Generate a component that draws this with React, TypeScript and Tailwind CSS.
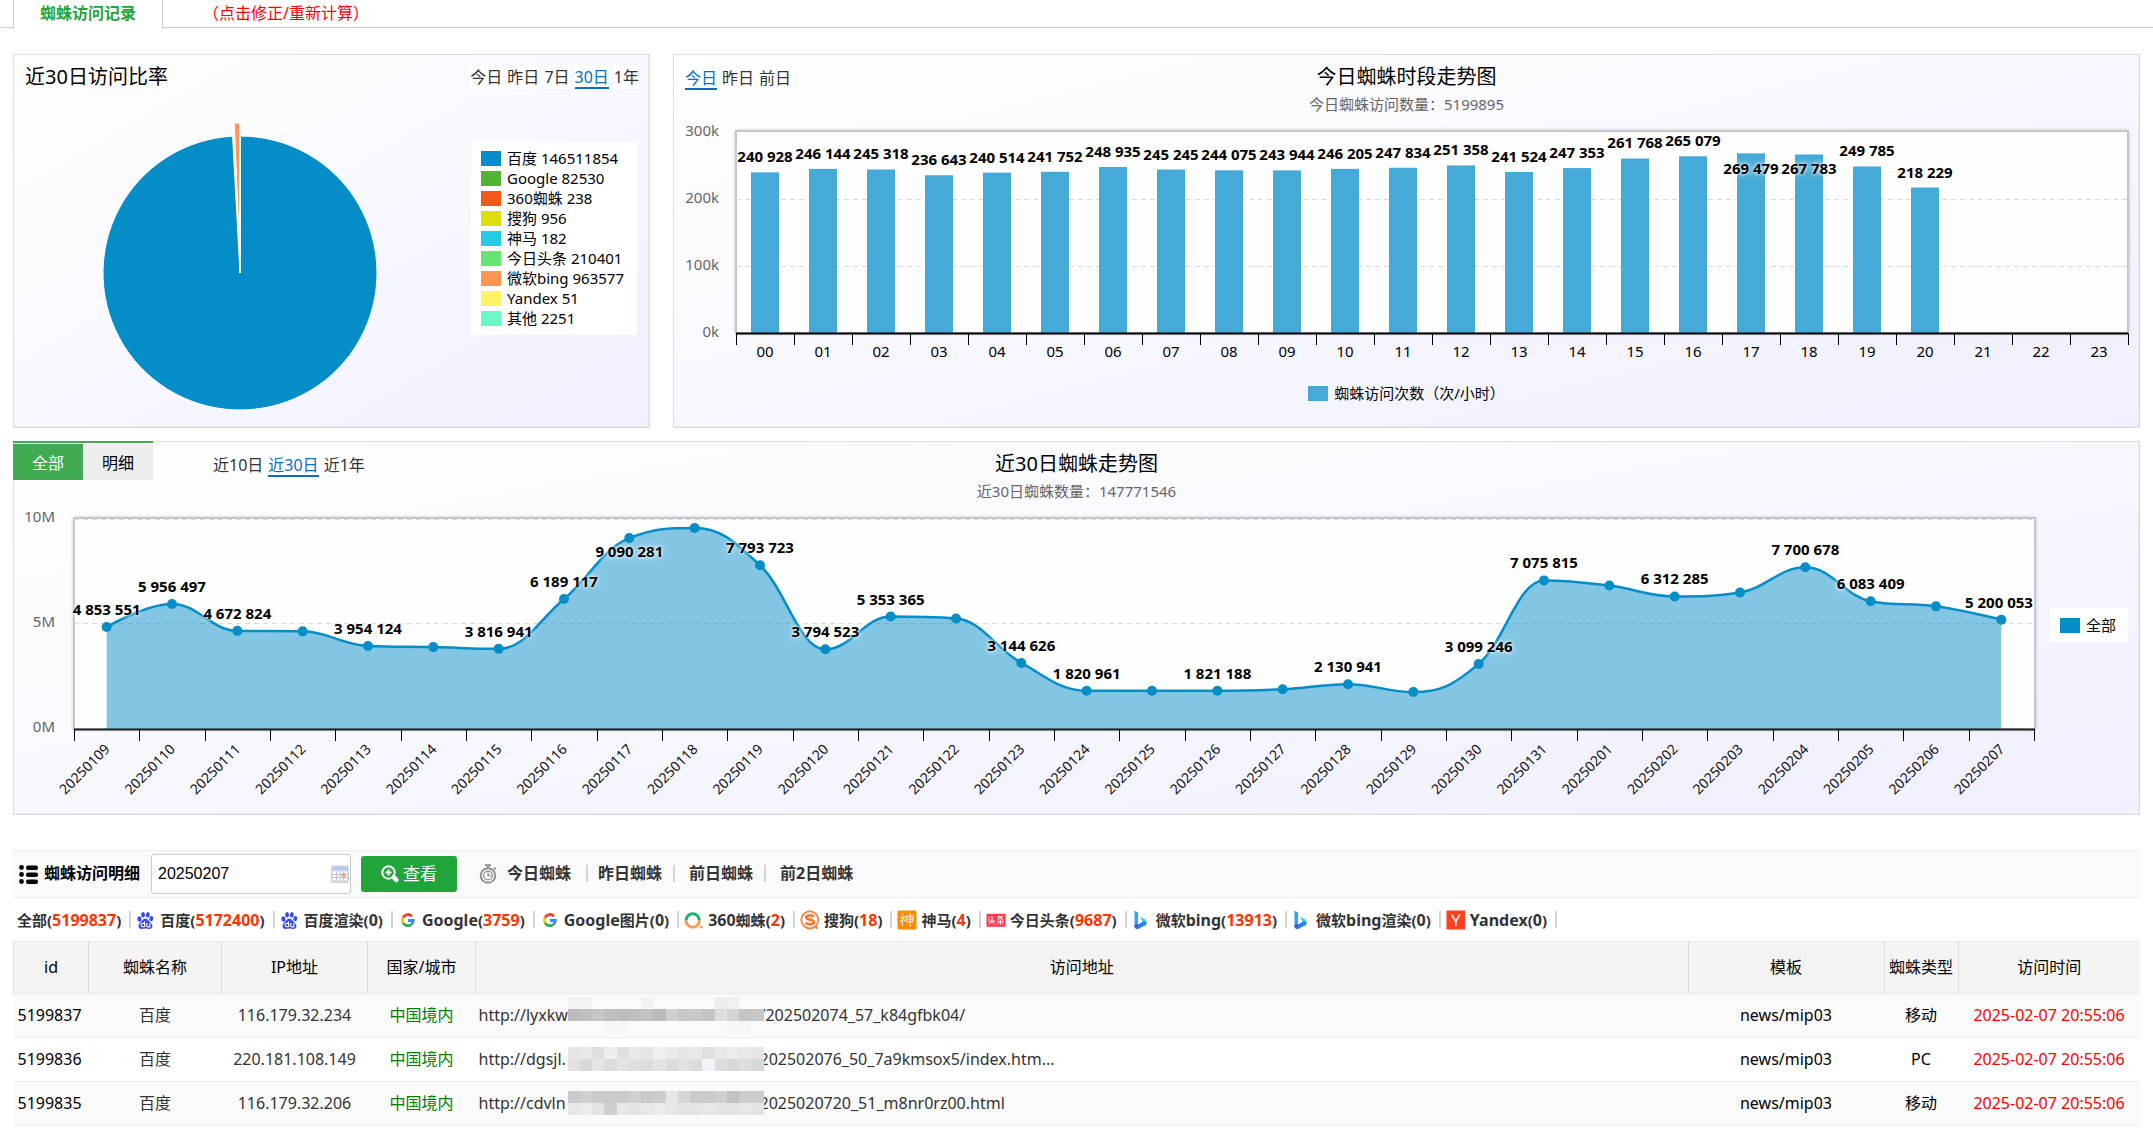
import React from "react";

const SANS = "font-['Noto_Sans','Noto_Sans_CJK_SC',sans-serif]";

/* ---------- data ---------- */

const ratio = [
  { name: "百度", count: 146511854, color: "#058dc7" },
  { name: "Google", count: 82530, color: "#50b432" },
  { name: "360蜘蛛", count: 238, color: "#f5561b" },
  { name: "搜狗", count: 956, color: "#dddf0d" },
  { name: "神马", count: 182, color: "#24cbe5" },
  { name: "今日头条", count: 210401, color: "#64e572" },
  { name: "微软bing", count: 963577, color: "#ff9655" },
  { name: "Yandex", count: 51, color: "#fff263" },
  { name: "其他", count: 2251, color: "#6af9c4" },
];

const hourly = [
  240928, 246144, 245318, 236643, 240514, 241752, 248935, 245245, 244075, 243944, 246205, 247834,
  251358, 241524, 247353, 261768, 265079, 269479, 267783, 249785, 218229,
];

const daily: [string, number, ("above" | "below")?][] = [
  ["20250109", 4853551, "above"],
  ["20250110", 5956497, "above"],
  ["20250111", 4672824, "above"],
  ["20250112", 4650000],
  ["20250113", 3954124, "above"],
  ["20250114", 3900000],
  ["20250115", 3816941, "above"],
  ["20250116", 6189117, "above"],
  ["20250117", 9090281, "below"],
  ["20250118", 9570000],
  ["20250119", 7793723, "above"],
  ["20250120", 3794523, "above"],
  ["20250121", 5353365, "above"],
  ["20250122", 5260000],
  ["20250123", 3144626, "above"],
  ["20250124", 1820961, "above"],
  ["20250125", 1820000],
  ["20250126", 1821188, "above"],
  ["20250127", 1890000],
  ["20250128", 2130941, "above"],
  ["20250129", 1760000],
  ["20250130", 3099246, "above"],
  ["20250131", 7075815, "above"],
  ["20250201", 6830000],
  ["20250202", 6312285, "above"],
  ["20250203", 6500000],
  ["20250204", 7700678, "above"],
  ["20250205", 6083409, "above"],
  ["20250206", 5840000],
  ["20250207", 5200053, "above"],
];

const spaced = (n: number) => String(n).replace(/\B(?=(\d{3})+$)/g, " ");

/* ---------- shared parts ---------- */

const panelClass =
  "border border-[#ddd] bg-[linear-gradient(to_bottom_right,#ffffff_0%,#f0f0ff_100%)] shadow-[inset_-1px_-1px_0_#e8e8ee]";

function RangeLinks({ items, active }: { items: string[]; active: string }) {
  return (
    <nav className="flex h-6 gap-[5px] text-base leading-6">
      {items.map((t) => (
        <a
          key={t}
          href="#"
          className={
            t === active
              ? "h-6 border-b-2 border-[#0a6ebd] bg-white text-[#0a6ebd]"
              : "bg-white text-[#333]"
          }
        >
          {t}
        </a>
      ))}
    </nav>
  );
}

function ChartTitle({ title, sub }: { title: string; sub: string }) {
  return (
    <div className="pt-[7px] text-center">
      <h2 className="text-xl leading-[30px] text-black">{title}</h2>
      <p className="text-[15px] leading-[25px] text-[#666]">{sub}</p>
    </div>
  );
}

function LegendItem({ color, label }: { color: string; label: string }) {
  return (
    <div className="flex h-5 items-center gap-1.5 text-[15px] leading-5 whitespace-nowrap text-black">
      <span className="h-[15px] w-5" style={{ backgroundColor: color }} />
      {label}
    </div>
  );
}

const labelClass = "fill-black text-[15px] font-bold [text-shadow:0_0_6px_#fff,0_0_3px_#fff]";

/* ---------- charts ---------- */

function PieChart() {
  const cx = 226;
  const cy = 174;
  const r = 137;
  const at = (deg: number, dy = 0) => {
    const a = (deg * Math.PI) / 180;
    return `${cx + r * Math.sin(a)},${cy + dy - r * Math.cos(a)}`;
  };
  return (
    <svg viewBox="0 0 457 328" className="min-w-0 flex-1">
      <path d={`M${cx},${cy} L${at(0)} A${r},${r} 0 1 1 ${at(-3.1)} Z`} fill="#058dc7" stroke="#fff" />
      <path
        d={`M${cx},${cy - 13} L${at(-2.4, -13)} A${r},${r} 0 0 1 ${at(-0.1, -13)} Z`}
        fill="#ff9655"
        stroke="#fff"
      />
      <path d={`M${cx},${cy} L${at(0)}`} stroke="#fff" strokeWidth="2" />
    </svg>
  );
}

function BarChart() {
  const x0 = 62;
  const x1 = 1454;
  const base = 216;
  const step = 58;
  const y = (v: number) => base - (v / 300000) * 200;
  return (
    <svg viewBox="0 0 1465 258" className="block w-full">
      <rect x={x0} y="14" width={x1 - x0} height={base - 14} fill="#000" opacity="0.3" className="blur-[2px]" />
      <rect x={x0} y="14" width={x1 - x0} height={base - 14} fill="#fefefe" stroke="#c6c6c8" strokeWidth="2" />
      {[100000, 200000].map((v) => (
        <line
          key={v}
          x1={x0}
          x2={x1}
          y1={Math.floor(y(v)) + 0.5}
          y2={Math.floor(y(v)) + 0.5}
          stroke="#d8d8d8"
          strokeDasharray="5 4"
        />
      ))}
      {["0k", "100k", "200k", "300k"].map((t, i) => (
        <text key={t} x="45" y={220 - i * 67} textAnchor="end" className="fill-[#666] text-[15px]">
          {t}
        </text>
      ))}
      {hourly.map((v, i) => (
        <rect key={i} x={x0 + step * i + 15} y={y(v)} width="28" height={base - y(v)} fill="#45aad7" />
      ))}
      <line x1={x0} x2={x1} y1={base + 0.5} y2={base + 0.5} stroke="#000" strokeWidth="2" />
      {Array.from({ length: 25 }, (_, i) => (
        <line key={i} x1={x0 + step * i + 0.5} x2={x0 + step * i + 0.5} y1={base} y2={base + 12} stroke="#000" />
      ))}
      {Array.from({ length: 24 }, (_, i) => (
        <text key={i} x={x0 + step * i + 29} y="240" textAnchor="middle" className="fill-black text-[15px]">
          {String(i).padStart(2, "0")}
        </text>
      ))}
      {hourly.map((v, i) => (
        <text
          key={i}
          x={x0 + step * i + 29}
          y={v > 266000 ? 57 : Math.round(y(v)) - 10}
          textAnchor="middle"
          className={labelClass}
        >
          {spaced(v)}
        </text>
      ))}
    </svg>
  );
}

/* Smooth curve through the points, without overshoot at local extremes. */
function splinePath(pts: { x: number; y: number }[]) {
  const s = 1.5;
  const d = s + 1;
  let path = `M${pts[0].x},${pts[0].y}`;
  let prev = { ...pts[0] };
  for (let i = 1; i < pts.length; i++) {
    const p = pts[i];
    const last = pts[i - 1];
    const next = pts[i + 1];
    let left = { x: p.x, y: p.y };
    let right = { x: p.x, y: p.y };
    if (next) {
      left = { x: (s * p.x + last.x) / d, y: (s * p.y + last.y) / d };
      right = { x: (s * p.x + next.x) / d, y: (s * p.y + next.y) / d };
      const fix = ((right.y - left.y) * (right.x - p.x)) / (right.x - left.x) + p.y - right.y;
      left.y += fix;
      right.y += fix;
      if (left.y > last.y && left.y > p.y) {
        left.y = Math.max(last.y, p.y);
        right.y = 2 * p.y - left.y;
      } else if (left.y < last.y && left.y < p.y) {
        left.y = Math.min(last.y, p.y);
        right.y = 2 * p.y - left.y;
      }
      if (right.y > next.y && right.y > p.y) {
        right.y = Math.max(next.y, p.y);
        left.y = 2 * p.y - right.y;
      } else if (right.y < next.y && right.y < p.y) {
        right.y = Math.min(next.y, p.y);
        left.y = 2 * p.y - right.y;
      }
    }
    path += ` C${prev.x},${prev.y} ${left.x},${left.y} ${p.x},${p.y}`;
    prev = right;
  }
  return path;
}

function TrendChart() {
  const x0 = 60;
  const x1 = 2020;
  const base = 225;
  const step = (x1 - x0) / daily.length;
  const pts = daily.map(([, v], i) => ({
    x: x0 + step * (i + 0.5),
    y: base - (v / 10000000) * 210,
  }));
  const line = splinePath(pts);
  return (
    <svg viewBox="0 0 2036 310" className="block min-w-0 flex-1">
      <rect x={x0} y="14" width={x1 - x0 + 1} height={base - 14} fill="#000" opacity="0.3" className="blur-[2px]" />
      <rect x={x0} y="14" width={x1 - x0 + 1} height={base - 14} fill="#fefefe" stroke="#c6c6c8" strokeWidth="2" />
      {[15.5, 119.5].map((v) => (
        <line key={v} x1={x0} x2={x1} y1={v} y2={v} stroke="#d8d8d8" strokeDasharray="5 4" />
      ))}
      {["0M", "5M", "10M"].map((t, i) => (
        <text key={t} x="41" y={228 - i * 105} textAnchor="end" className="fill-[#666] text-[15px]">
          {t}
        </text>
      ))}
      <path
        d={`${line} L${pts[pts.length - 1].x},${base} L${pts[0].x},${base} Z`}
        fill="#058dc7"
        fillOpacity="0.5"
      />
      <line x1={x0} x2={x1 + 1} y1={base + 0.5} y2={base + 0.5} stroke="#222" strokeWidth="2" />
      {Array.from({ length: 31 }, (_, i) => {
        const x = Math.round(x0 + step * i) + 0.5;
        return <line key={i} x1={x} x2={x} y1={base} y2={base + 12} stroke="#000" />;
      })}
      <path d={line} fill="none" stroke="#058dc7" strokeWidth="2.5" />
      {pts.map((p, i) => (
        <circle key={i} cx={p.x} cy={p.y} r="5" fill="#058dc7" />
      ))}
      {daily.map(([date], i) => {
        const x = pts[i].x + 4;
        return (
          <text
            key={date}
            x={x}
            y="246"
            textAnchor="end"
            transform={`rotate(-45 ${x} 246)`}
            className="fill-[#111] text-[14px]"
          >
            {date}
          </text>
        );
      })}
      {daily.map(([date, v, place], i) =>
        place ? (
          <text
            key={date}
            x={Math.min(pts[i].x, x1 - 35)}
            y={Math.round(pts[i].y) + (place === "above" ? -12 : 19)}
            textAnchor="middle"
            className={labelClass}
          >
            {spaced(v)}
          </text>
        ) : null
      )}
    </svg>
  );
}

/* ---------- icons ---------- */

const ListIcon = () => (
  <svg viewBox="0 0 19 19" className="size-[19px]">
    {[2.5, 9.5, 16.5].map((y) => (
      <g key={y}>
        <circle cx="2.5" cy={y} r="2.4" />
        <rect x="7" y={y - 2} width="12" height="4.4" rx="2" />
      </g>
    ))}
  </svg>
);

const CalendarIcon = () => (
  <svg viewBox="0 0 18 18" className="size-[18px]">
    <rect x="0.5" y="1" width="17" height="16.5" rx="1.5" fill="#d9dce4" stroke="#cdd0d8" />
    <path d="M1 1.5h16v4H1z" fill="#b9cbe6" />
    <path d="M2 6.500h14V15H2z" fill="#fff" />
    <path d="M2 9.500h14M2 12.500h14M5.500 6.500V15M9 6.500V15M12.500 6.500V15" stroke="#b8c4de" fill="none" />
    <path d="M10.500 8h4v4h-4z" fill="#f3a48c" />
  </svg>
);

const SearchPlusIcon = () => (
  <svg viewBox="0 0 18 18" className="size-[18px]" fill="none" stroke="#fff">
    <circle cx="7.500" cy="7.500" r="6.200" strokeWidth="2" />
    <path d="M7.500 4.500v6M4.500 7.500h6" strokeWidth="1.800" />
    <path d="M12.800 12.200l2.500 2.800" strokeWidth="4.500" strokeLinecap="round" />
  </svg>
);

const StopwatchIcon = () => (
  <svg viewBox="0 0 18 20" className="h-5 w-[18px]" fill="none" stroke="#8f9093">
    <path d="M6 1.200h6" strokeWidth="2" />
    <path d="M9 2v2M15 3.600l1.800 1.800" strokeWidth="2" />
    <circle cx="9" cy="11.500" r="7.300" strokeWidth="2" />
    <circle cx="9" cy="11.500" r="4.400" strokeWidth="1.300" />
    <path d="M9 8.500v3h2.600" strokeWidth="1.400" />
  </svg>
);

const BaiduIcon = () => (
  <svg viewBox="0 0 20 20" className="size-5">
    <g fill="#3b4be0">
      <ellipse cx="3.400" cy="9" rx="2" ry="2.700" transform="rotate(-12 3.4 9)" />
      <ellipse cx="7.100" cy="4.800" rx="1.900" ry="2.800" />
      <ellipse cx="11.800" cy="4.800" rx="1.900" ry="2.800" transform="rotate(8 11.8 4.8)" />
      <ellipse cx="15.300" cy="8.600" rx="2" ry="2.700" transform="rotate(12 15.3 8.6)" />
      <path d="M9.400 8.600c1.700 0 2.600 1.100 3.500 2.400 1.200 1.500 3.500 2.500 3.500 5 0 2-1.400 2.900-3.100 2.900-1.400 0-2.500-.4-3.900-.4s-2.500.4-3.900.4c-1.800 0-3-.9-3-2.900 0-2.500 2.200-3.500 3.400-5 .9-1.300 1.800-2.400 3.500-2.400z" />
    </g>
    <path
      d="M8.600 11.500v5.500M8.600 13.400H6.800a1.700 1.700 0 0 0 0 3.400h1.800M10.800 13v2.800c0 .8.400 1.100 1.200 1.100h1.800V13"
      fill="none"
      stroke="#fff"
      strokeWidth="1.1"
    />
  </svg>
);

const GoogleIcon = () => (
  <svg viewBox="0 0 20 20" className="size-5" fill="none" strokeWidth="2.8">
    <path d="M14 6.200A5.600 5.600 0 0 0 5 7.600" stroke="#ea4335" />
    <path d="M5 7.600a5.600 5.600 0 0 0 0 5.300" stroke="#fbbc05" />
    <path d="M5 12.900a5.600 5.600 0 0 0 8.200 1.700" stroke="#34a853" />
    <path d="M13.200 14.600a5.600 5.600 0 0 0 2.200-4.100H10" stroke="#4285f4" />
  </svg>
);

const So360Icon = () => (
  <svg viewBox="0 0 20 20" className="size-5" fill="none" strokeWidth="3">
    <path d="M2 10.500a6.700 6.700 0 1 1 13.400 0" stroke="#1fae6b" />
    <path d="M2 10.500a6.700 6.700 0 0 0 13.400 0" stroke="#f89a55" />
    <circle cx="17.200" cy="17" r="1.500" fill="#f89a55" />
  </svg>
);

const SogouIcon = () => (
  <svg viewBox="0 0 20 20" className="size-5" fill="none" stroke="#fb7a2d">
    <circle cx="9.800" cy="9.800" r="8.500" strokeWidth="1.700" />
    <path
      d="M14 6.500C13 5.200 6.300 4.500 6.300 7.500c0 3 7.500 1.400 7.500 4.600 0 3.100-6.800 2.500-8.300 1"
      strokeWidth="2.800"
    />
    <path d="M15.800 16.500l1.400 2.300" strokeWidth="2.200" />
  </svg>
);

const ShenmaIcon = () => (
  <svg viewBox="0 0 20 20" className="size-5" fill="none" stroke="#ffe9cf" strokeWidth="1.2">
    <rect x="0.5" y="0.5" width="19" height="19" rx="1.5" fill="#ff8a00" stroke="none" />
    <path d="M5.200 3.500l1.500 1.500M3 7.200h4.300L3.200 12M5.500 9.500V16M7 9.500l1 1.300M9.500 6.200h6.800l-.8 5.500H9.300zM9.500 9h6.500M13 3v14" />
  </svg>
);

const ToutiaoIcon = () => (
  <svg viewBox="0 0 20 20" className="size-5" fill="none" stroke="#fff">
    <rect x="0.5" y="3.800" width="19" height="13" fill="#fb3c50" stroke="none" />
    <path d="M6 6v5.500L2.800 14.500M2.800 6.800l1.400 1M2.400 9l1.500 1M2.200 11.200h7M6.500 12l2.500 2.500" />
    <path d="M13.300 5.500l-2 2.500M12.500 6.800h4l-5.500 3.400M12.500 7.500l5 2.700M11 11.700h6.800M14.300 10v4.800M12.800 12.700l-1.500 1.800M15.800 12.700l1.500 1.800" />
  </svg>
);

const BingIcon = () => (
  <svg viewBox="0 0 20 20" className="size-5">
    <path d="M2.500.8l3.600 1.700v13L2.500 17.300z" fill="#3ba0f4" />
    <path d="M7.800 6.800l4.200 2c2 1 2.900 2.600 2.700 4.600-.1 1.500-.9 2.500-2 3.200l-2.200-5z" fill="#35cfe8" />
    <path d="M2.500 16.500c.3 2.500 2.400 3.300 4.400 2.200l5.600-3.300c1.300-.8 2.100-1.900 2.200-3.200l-3.500-.6-5.100 3z" fill="#2f80ea" />
    <path d="M2.500 15.500l3.600-1.500v2.500c-1 1-2.500 1.500-3.600.2z" fill="#3a4fd8" />
  </svg>
);

const YandexIcon = () => (
  <svg viewBox="0 0 20 20" className="size-5">
    <rect x="0.5" y="0.5" width="18.5" height="19" fill="#fc3f1d" />
    <path d="M5.500 4.500l4.300 7V16M13.800 4.500l-4 7" fill="none" stroke="#ffe3dc" strokeWidth="1.8" />
  </svg>
);

/* ---------- list section ---------- */

const engines: { han?: string; latin?: string; after?: string; count: number; icon?: React.ReactNode }[] = [
  { han: "全部", count: 5199837 },
  { han: "百度", count: 5172400, icon: <BaiduIcon /> },
  { han: "百度渲染", count: 0, icon: <BaiduIcon /> },
  { latin: "Google", count: 3759, icon: <GoogleIcon /> },
  { latin: "Google", after: "图片", count: 0, icon: <GoogleIcon /> },
  { latin: "360", after: "蜘蛛", count: 2, icon: <So360Icon /> },
  { han: "搜狗", count: 18, icon: <SogouIcon /> },
  { han: "神马", count: 4, icon: <ShenmaIcon /> },
  { han: "今日头条", count: 9687, icon: <ToutiaoIcon /> },
  { han: "微软", latin: "bing", count: 13913, icon: <BingIcon /> },
  { han: "微软", latin: "bing", after: "渲染", count: 0, icon: <BingIcon /> },
  { latin: "Yandex", count: 0, icon: <YandexIcon /> },
];

const Divider = () => <span className="h-[17px] w-0.5 shrink-0 bg-[#d4d4d8]" />;

const mosaics = [
  [
    "#f3f3f2 #f3f3f2 #fafafa #fafafa #fafafa #fafafa #f3f3f2 #fafafa #fafafa #fafafa #fafafa #fafafa #ededee #f0f0f0 #fafafa #fafafa",
    "#bcbcbc #c0c0c2 #c6c6c6 #c0c0c2 #bbbcbe #bfbfc0 #c2c2c3 #b9bac0 #d0d0d0 #c8c8c8 #cacaca #c4c4c4 #dededf #d4d5d7 #c4c5c7 #c8c8c9",
    "#fafafa #fafafa #fafafa #f6f6f6 #f6f6f6 #fafafa #fafafa #fafafa #fafafa #fafafa #fafafa #fafafa #fafafa #f6f6f6 #f6f6f6 #fafafa",
  ],
  [
    "#e6e4e6 #e8e8ec #dfdfdf #eeeeee #dfdfdf #e9e9e9 #e5e5e5 #efefef #ebebeb #e5e5e5 #e8e8e8 #e1e1e1 #e8e8e8 #ebebeb #e8e8e8 #e8e4e4",
    "#e4e0e0 #d8d8de #e4e4e4 #dcdcdc #e4e4e4 #dfdfdf #dddddd #e3e3e3 #dbdbdb #e1e1e1 #dcdcdc #f2f2f9 #dddddd #d8d8da #dedede #d8d8dc",
  ],
  [
    "#cbcbcb #d0d0d0 #cbcbc9 #cacac8 #cbcbcb #d0d0d0 #c9c9c9 #cdcdcd #e6e6e6 #d6d6d6 #cacaca #cacaca #d0d0d0 #c1c2c4 #cdcdcd #cdcdcd",
    "#e8e8e8 #ebebeb #e4e4e4 #cfcfcf #e8e8e8 #e4e4e4 #e8e8e8 #ebebeb #e8e8e8 #e4e4e4 #e4e4e4 #e8e8e8 #e4e4e4 #e4e4e4 #e8e8e8 #e4e4e4",
  ],
];

const visits = [
  { id: "5199837", ip: "116.179.32.234", head: "http://lyxkw", tail: "/202502074_57_k84gfbk04/", type: "移动" },
  { id: "5199836", ip: "220.181.108.149", head: "http://dgsjl.", tail: "202502076_50_7a9kmsox5/index.htm...", type: "PC" },
  { id: "5199835", ip: "116.179.32.206", head: "http://cdvln", tail: "2025020720_51_m8nr0rz00.html", type: "移动" },
];

function Mosaic({ rows }: { rows: string[] }) {
  return (
    <span className="relative -mr-1 flex w-[196px] shrink-0 flex-col">
      {rows.map((row, i) => (
        <span key={i} className="flex h-3">
          {row.split(" ").map((c, j) => (
            <span key={j} className="h-3 flex-1" style={{ backgroundColor: c }} />
          ))}
        </span>
      ))}
    </span>
  );
}

const columns = [
  { label: "id", cls: "w-[75px]" },
  { label: "蜘蛛名称", cls: "w-[133px]" },
  { label: "IP地址", cls: "w-[146px]" },
  { label: "国家/城市", cls: "w-[108px]" },
  { label: "访问地址", cls: "" },
  { label: "模板", cls: "w-[196px]" },
  { label: "蜘蛛类型", cls: "w-[74px]" },
  { label: "访问时间", cls: "w-[182px]" },
];

export default function App() {
  return (
    <div className={`${SANS} min-h-screen bg-white pb-1 text-base text-black`}>
      <header className="flex h-[29px] pl-px leading-[26px]">
        <div className="mb-px w-3 border-b border-[#ccc]" />
        <a
          href="#"
          className="flex w-[150px] justify-center border-x border-[#ccc] font-bold text-[#21a53b]"
        >
          蜘蛛访问记录
        </a>
        <div className="mb-px flex-1 border-b border-[#ccc] pl-10">
          <a href="#" className="text-[red]">
            （点击修正/重新计算）
          </a>
        </div>
      </header>

      <main className="px-[13px]">
        <div className="mt-[25px] grid grid-cols-[637fr_1467fr] gap-[23px]">
          <section className={panelClass}>
            <div className="flex h-11 items-center justify-between pr-2.5 pl-[11px]">
              <h2 className="text-xl leading-[30px]">近30日访问比率</h2>
              <RangeLinks items={["今日", "昨日", "7日", "30日", "1年"]} active="30日" />
            </div>
            <div className="flex items-start">
              <PieChart />
              <div className="mt-[43px] mr-3 w-[166px] bg-white px-2.5 pt-1.5 pb-[7px]">
                {ratio.map((r) => (
                  <LegendItem key={r.name} color={r.color} label={`${r.name} ${r.count}`} />
                ))}
              </div>
            </div>
          </section>

          <section className={panelClass}>
            <div className="grid grid-cols-[1fr_auto_1fr] px-[11px]">
              <div className="pt-[11px]">
                <RangeLinks items={["今日", "昨日", "前日"]} active="今日" />
              </div>
              <ChartTitle title="今日蜘蛛时段走势图" sub="今日蜘蛛访问数量：5199895" />
            </div>
            <BarChart />
            <div className="mb-4 flex h-9 items-center justify-center">
              <LegendItem color="#45aad7" label="蜘蛛访问次数（次/小时）" />
            </div>
          </section>
        </div>

        <section className={`${panelClass} mt-[13px]`}>
          <div className="grid grid-cols-[1fr_auto_1fr]">
            <div className="-mt-px -ml-px flex items-start">
              <div className="flex border-t-2 border-[#42ab52] pt-px">
                <button className="h-9 w-[70px] bg-[#42ab52] pt-0.5 text-white">全部</button>
                <button className="h-9 w-[70px] bg-[#eee] pt-0.5">明细</button>
              </div>
              <div className="mt-3 ml-[60px]">
                <RangeLinks items={["近10日", "近30日", "近1年"]} active="近30日" />
              </div>
            </div>
            <ChartTitle title="近30日蜘蛛走势图" sub="近30日蜘蛛数量：147771546" />
          </div>
          <div className="flex items-start">
            <TrendChart />
            <div className="mt-[104px] mr-[11px] w-[78px] bg-white px-2.5 py-[7px]">
              <LegendItem color="#058dc7" label="全部" />
            </div>
          </div>
        </section>

        <form
          className="mt-[35px] flex h-12 items-center border-y border-[#eee] bg-[#fafafa] pl-1.5"
          onSubmit={(e) => e.preventDefault()}
        >
          <ListIcon />
          <label htmlFor="day" className="ml-1.5 w-[107px] pb-0.5 font-bold">
            蜘蛛访问明细
          </label>
          <div className="relative">
            <input
              id="day"
              defaultValue="20250207"
              className="block h-10 w-[200px] rounded-[3px] border border-[#ccc] bg-white px-1.5 font-['Liberation_Sans',sans-serif] text-base"
            />
            <span className="absolute top-[11px] right-0.5">
              <CalendarIcon />
            </span>
          </div>
          <button className="ml-2.5 flex h-9 w-24 items-center justify-center gap-1 rounded-[3px] bg-[#21a53b] text-[17px] text-white">
            <SearchPlusIcon />
            查看
          </button>
          <span className="ml-[22px]">
            <StopwatchIcon />
          </span>
          <nav className="ml-2.5 flex items-center pb-0.5 font-bold text-[#333]">
            <a href="#" className="mr-[15px]">今日蜘蛛</a>
            <Divider />
            <a href="#" className="mr-[11px] ml-2.5">昨日蜘蛛</a>
            <Divider />
            <a href="#" className="mr-[11px] ml-3.5">前日蜘蛛</a>
            <Divider />
            <a href="#" className="ml-3.5">前2日蜘蛛</a>
          </nav>
        </form>

        <nav className="flex h-[43px] items-center overflow-hidden pl-1 text-[15px] font-bold whitespace-nowrap text-[#333]">
          {engines.map((e, i) => (
            <React.Fragment key={i}>
              <a href="#" className="mr-2 flex items-center gap-1">
                {e.icon}
                <span>
                  {e.han}
                  <span className="text-base">{e.latin}</span>
                  {e.after}(
                  <span className={e.count ? "text-base text-[#ff3300]" : "text-base"}>{e.count}</span>)
                </span>
              </a>
              <span className="mr-[5px] flex">
                <Divider />
              </span>
            </React.Fragment>
          ))}
        </nav>

        <table className="w-full table-fixed border-collapse text-center leading-6">
          <thead>
            <tr className="h-[52px] border-y border-[#eaeaea] bg-[#f4f4f4]">
              {columns.map((c, i) => (
                <th
                  key={c.label}
                  className={`${c.cls} border-[#dcdcdc] p-0 pb-0.5 font-normal ${i === 0 ? "border-l" : ""} ${
                    i < columns.length - 1 ? "border-r" : ""
                  }`}
                >
                  {c.label}
                </th>
              ))}
            </tr>
          </thead>
          <tbody>
            {visits.map((v, i) => (
              <tr key={v.id} className="h-11 border-b border-[#eaeaea] odd:bg-[#fafafa]">
                <td className="p-0 pb-0.5 pl-1 text-left">{v.id}</td>
                <td className="p-0 pb-0.5 text-[#333]">百度</td>
                <td className="p-0 pb-0.5 text-[#333]">{v.ip}</td>
                <td className="p-0 pb-0.5 text-[green]">中国境内</td>
                <td className="p-0 pb-0.5 pl-[3px] text-left text-[#333]">
                  <a href="#" className="flex items-center">
                    <span className="w-[89px] shrink-0 overflow-hidden">{v.head}</span>
                    <Mosaic rows={mosaics[i]} />
                    <span>{v.tail}</span>
                  </a>
                </td>
                <td className="p-0 pb-0.5">news/mip03</td>
                <td className="p-0 pb-0.5">{v.type}</td>
                <td className="p-0 pb-0.5 text-[red]">2025-02-07 20:55:06</td>
              </tr>
            ))}
          </tbody>
        </table>
      </main>
    </div>
  );
}
